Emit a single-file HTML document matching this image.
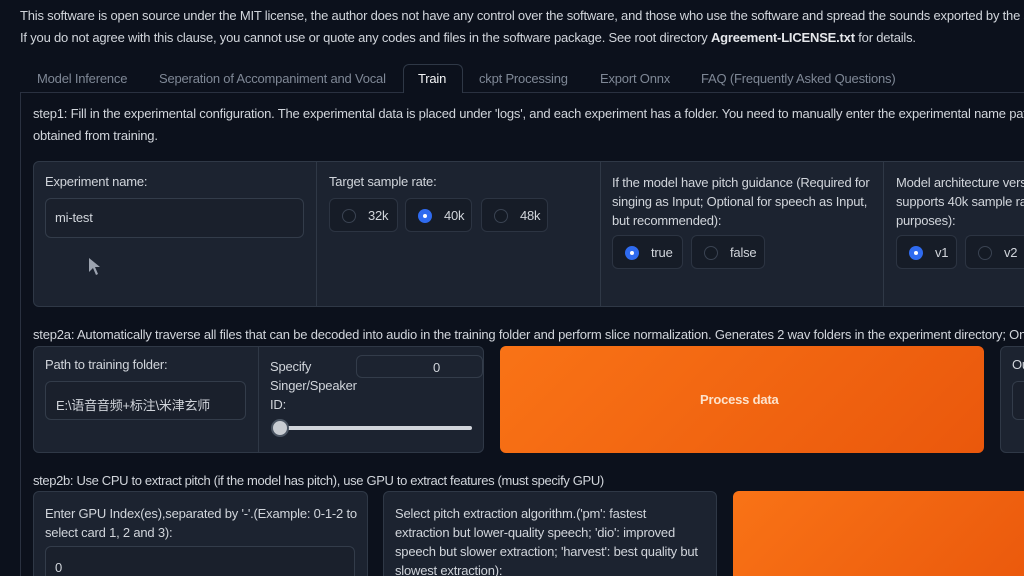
<!DOCTYPE html>
<html><head><meta charset="utf-8"><style>
*{margin:0;padding:0;box-sizing:border-box}
html,body{width:1024px;height:576px;overflow:hidden}
body{background:#0c111c;font-family:"Liberation Sans","Noto Sans CJK SC",sans-serif;color:#d1d5db;font-size:13px;letter-spacing:-0.2px}
#w{position:relative;width:1024px;height:576px;overflow:hidden}
.a{position:absolute;white-space:nowrap}
.box{position:absolute;background:#1c2330;border:1px solid #2f3846;border-radius:6px}
.inp{position:absolute;background:#1a202c;border:1px solid #333c4a;border-radius:6px}
.rad{position:absolute;background:#161c27;border:1px solid #2c3442;border-radius:6px;height:34px}
.dot{position:absolute;top:10px;left:12px;width:14px;height:14px;border-radius:50%;border:1px solid #3a4352;background:#141a24}
.dot.on{background:#2f6bf0;border:none}
.dot.on::after{content:"";position:absolute;left:5px;top:5px;width:4px;height:4px;border-radius:50%;background:#fff}
.rad span{position:absolute;top:9px;left:38px;color:#d1d5db}
.vl{position:absolute;width:1px;background:#2f3846}
.tab{position:absolute;top:71px;color:#7f8896;font-size:13px}
.org{position:absolute;background:linear-gradient(135deg,#f97316,#ea580c);border-radius:6px}
</style></head><body><div id="w">
<div class="a" style="left:20px;top:8px">This software is open source under the MIT license, the author does not have any control over the software, and those who use the software and spread the sounds exported by the software are solely responsible.</div>
<div class="a" style="left:20px;top:30px">If you do not agree with this clause, you cannot use or quote any codes and files in the software package. See root directory <b style="color:#e5e7eb">Agreement-LICENSE.txt</b> for details.</div>

<div style="position:absolute;left:20px;top:92px;width:1004px;height:1px;background:#2a3140"></div>
<div style="position:absolute;left:20px;top:92px;width:1px;height:484px;background:#2a3140"></div>
<div style="position:absolute;left:403px;top:64px;width:60px;height:29px;border:1px solid #2f3846;border-bottom:none;border-radius:6px 6px 0 0;background:#0c111c"></div>
<div class="tab" style="left:37px">Model Inference</div>
<div class="tab" style="left:159px">Seperation of Accompaniment and Vocal</div>
<div class="tab" style="left:418px;color:#f3f4f6">Train</div>
<div class="tab" style="left:479px">ckpt Processing</div>
<div class="tab" style="left:600px">Export Onnx</div>
<div class="tab" style="left:701px">FAQ (Frequently Asked Questions)</div>

<div class="a" style="left:33px;top:106px">step1: Fill in the experimental configuration. The experimental data is placed under 'logs', and each experiment has a folder. You need to manually enter the experimental name path, which contains the experimental configuration, logs, and model files</div>
<div class="a" style="left:33px;top:128px">obtained from training.</div>

<div class="box" style="left:33px;top:161px;width:1000px;height:146px"></div>
<div class="vl" style="left:316px;top:162px;height:144px"></div>
<div class="vl" style="left:600px;top:162px;height:144px"></div>
<div class="vl" style="left:883px;top:162px;height:144px"></div>
<div class="a" style="left:45px;top:174px">Experiment name:</div>
<div class="inp" style="left:45px;top:198px;width:259px;height:40px"></div>
<div class="a" style="left:55px;top:210px">mi-test</div>
<svg style="position:absolute;left:88px;top:257px" width="14" height="20"><path d="M1 1 L1 15 L5 11 L8 18 L10 17 L7 10 L12 10 Z" fill="#9ca3af"/></svg>

<div class="a" style="left:329px;top:174px">Target sample rate:</div>
<div class="rad" style="left:329px;top:198px;width:69px"><div class="dot"></div><span>32k</span></div>
<div class="rad" style="left:405px;top:198px;width:67px"><div class="dot on"></div><span>40k</span></div>
<div class="rad" style="left:481px;top:198px;width:67px"><div class="dot"></div><span>48k</span></div>

<div class="a" style="left:612px;top:173px;line-height:19px">If the model have pitch guidance (Required for<br>singing as Input; Optional for speech as Input,<br>but recommended):</div>
<div class="rad" style="left:612px;top:235px;width:71px"><div class="dot on"></div><span>true</span></div>
<div class="rad" style="left:691px;top:235px;width:74px"><div class="dot"></div><span>false</span></div>

<div class="a" style="left:896px;top:173px;line-height:19px">Model architecture version (v2<br>supports 40k sample rate for test<br>purposes):</div>
<div class="rad" style="left:896px;top:235px;width:61px"><div class="dot on"></div><span>v1</span></div>
<div class="rad" style="left:965px;top:235px;width:59px;border-right:none;border-radius:6px 0 0 6px"><div class="dot"></div><span>v2</span></div>

<div class="a" style="left:33px;top:327px">step2a: Automatically traverse all files that can be decoded into audio in the training folder and perform slice normalization. Generates 2 wav folders in the experiment directory; Only single-singer training supported.</div>

<div class="box" style="left:33px;top:346px;width:451px;height:107px"></div>
<div class="vl" style="left:258px;top:347px;height:105px"></div>
<div class="a" style="left:45px;top:357px">Path to training folder:</div>
<div class="inp" style="left:45px;top:381px;width:201px;height:39px;overflow:hidden"><div class="a" style="left:10px;top:13px">E:\语音音频+标注\米津玄师</div></div>
<div class="a" style="left:270px;top:357px;line-height:19px">Specify<br>Singer/Speaker<br>ID:</div>
<div class="inp" style="left:356px;top:355px;width:127px;height:23px;background:#1c2330"><div class="a" style="left:76px;top:4px">0</div></div>
<div style="position:absolute;left:278px;top:426px;width:194px;height:4px;border-radius:2px;background:#d1d5db"></div>
<div style="position:absolute;left:271px;top:419px;width:18px;height:18px;border-radius:50%;background:#c8ccd2;border:2px solid #4b5563"></div>

<div class="org" style="left:500px;top:346px;width:484px;height:107px"></div>
<div class="a" style="left:700px;top:392px;color:#fde3cc;font-weight:bold;font-size:13px">Process data</div>

<div class="box" style="left:1000px;top:346px;width:40px;height:107px"></div>
<div class="a" style="left:1012px;top:357px">Ou</div>
<div class="inp" style="left:1012px;top:381px;width:30px;height:39px"></div>

<div class="a" style="left:33px;top:473px;font-size:13px;letter-spacing:-0.35px">step2b: Use CPU to extract pitch (if the model has pitch), use GPU to extract features (must specify GPU)</div>
<div class="box" style="left:33px;top:491px;width:335px;height:100px"></div>
<div class="a" style="left:45px;top:504px;line-height:19px">Enter GPU Index(es),separated by '-'.(Example: 0-1-2 to<br>select card 1, 2 and 3):</div>
<div class="inp" style="left:45px;top:546px;width:310px;height:40px"></div>
<div class="a" style="left:55px;top:560px">0</div>
<div class="box" style="left:383px;top:491px;width:334px;height:100px"></div>
<div class="a" style="left:395px;top:504px;line-height:19px">Select pitch extraction algorithm.('pm': fastest<br>extraction but lower-quality speech; 'dio': improved<br>speech but slower extraction; 'harvest': best quality but<br>slowest extraction):</div>
<div class="org" style="left:733px;top:491px;width:300px;height:100px"></div>
</div></body></html>
